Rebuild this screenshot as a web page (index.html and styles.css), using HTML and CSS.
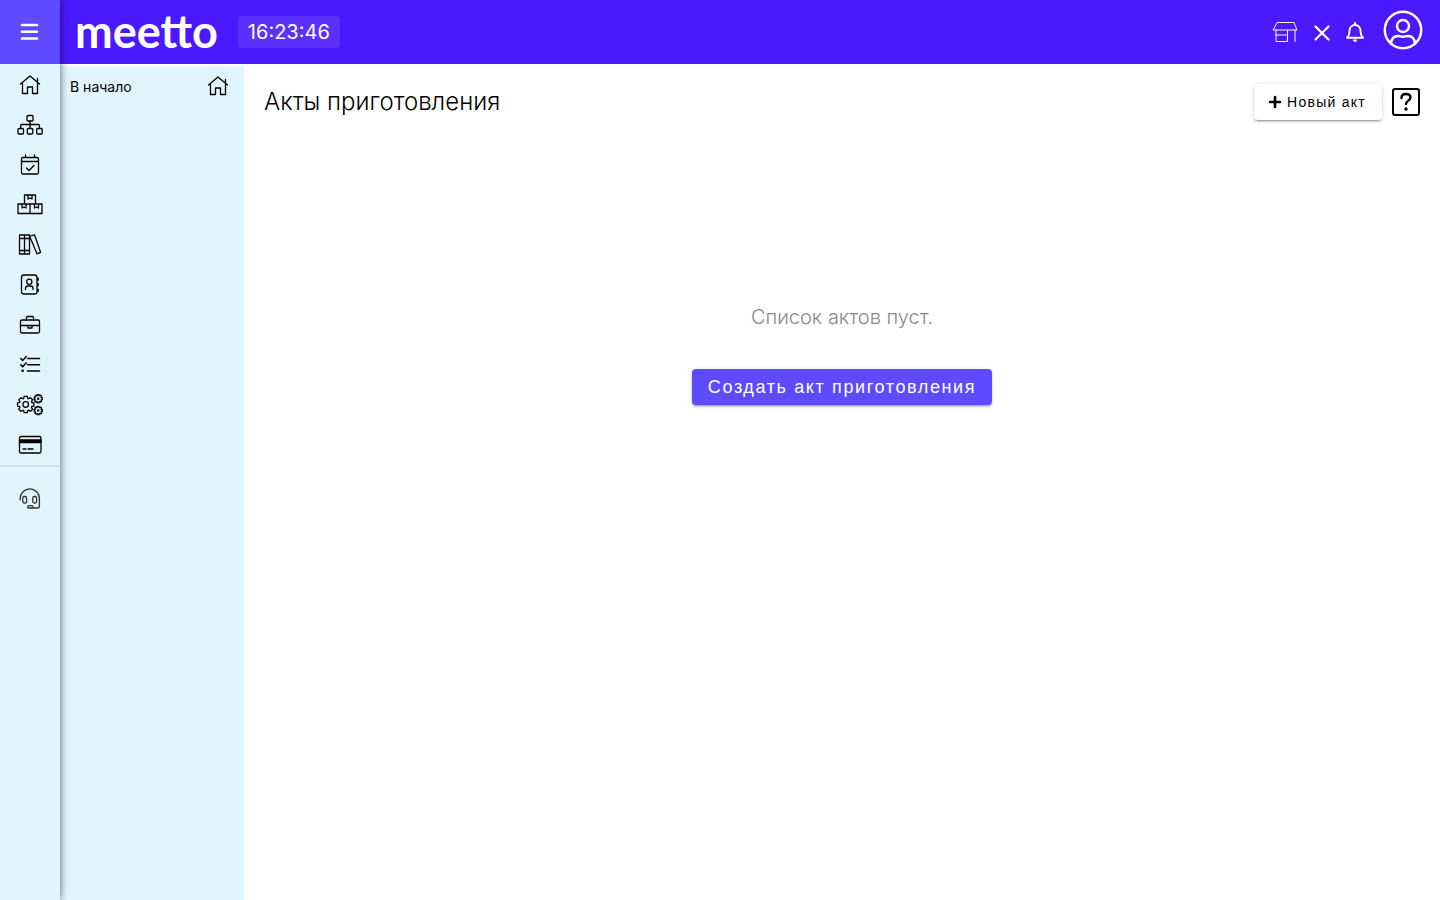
FILE: index.html
```html
<!DOCTYPE html>
<html lang="ru">

<head>
    <meta charset="UTF-8">
    <meta name="viewport" content="width=device-width, initial-scale=1.0">
    <title>Акты приготовления</title>
    <link rel="stylesheet" href="styles.css">
</head>

<body>
    <aside class="sidebar">
        <button class="menu-toggle" type="button" aria-label="Меню">
            <svg class="icon" viewBox="0 0 28 28"><path d="M6 7h15M6 13.700h15M6 20.500h15" stroke-width="2.600"/></svg>
        </button>
        <nav class="side-nav">
            <a href="#" aria-label="Главная">
                <svg class="icon" viewBox="0 0 28 28"><path d="M4.500 13 14 5l9.500 8M6.500 12v10.500h5V16h5v6.500h5V12M21.500 11V7.500"/></svg>
            </a>
            <a href="#" aria-label="Структура">
                <svg class="icon" viewBox="0 0 28 28"><rect x="11" y="4.500" width="6" height="5.500" rx="1"/><rect x="2" y="17.500" width="5.500" height="5.500" rx="1"/><rect x="11.300" y="17.500" width="5.500" height="5.500" rx="1"/><rect x="20.700" y="17.500" width="5.500" height="5.500" rx="1"/><path d="M14 10v7.500M4.700 17.500v-3q0-1 1-1h16.700q1 0 1 1v3"/></svg>
            </a>
            <a href="#" aria-label="Календарь">
                <svg class="icon" viewBox="0 0 28 28"><rect x="5.500" y="6.500" width="17" height="16.500" rx="1.500"/><path d="M5.500 10.500h17M9.500 4v2.500M18.500 4v2.500M10.500 17l2.500 2.500 5-5"/></svg>
            </a>
            <a href="#" aria-label="Склад">
                <svg class="icon" viewBox="0 0 28 28"><path d="M8.500 13V4h11v9M2 13h24v9.500H2zM14 13v9.500M12 4v4l2-1 2 1V4M6 13v4l2-1 2 1v-4M18.500 13v4l2-1 2 1v-4"/></svg>
            </a>
            <a href="#" aria-label="Справочники">
                <svg class="icon" viewBox="0 0 28 28"><path d="M3.500 4h10v19h-10zM8.500 4v19M3.500 7.500h10M3.500 19.500h10M14.500 5l4-1.200L24.600 21.300l-3.600 1.500L13.500 5"/></svg>
            </a>
            <a href="#" aria-label="Контакты">
                <svg class="icon" viewBox="0 0 28 28"><rect x="5.500" y="4" width="15.500" height="19" rx="2.500"/><circle cx="13.300" cy="10.700" r="2.600"/><path d="M9.500 18.500v-1q0-2.500 2.500-2.500h2.500q2.500 0 2.500 2.500v1"/><path d="M22 7.500v1.500M22 13v1.500M22 18.500v1.500" stroke-width="1.800"/></svg>
            </a>
            <a href="#" aria-label="Портфель">
                <svg class="icon" viewBox="0 0 28 28"><rect x="4.500" y="9" width="19" height="13" rx="1.500"/><path d="M10.500 9V6.500q0-1 1-1h5q1 0 1 1V9M4.500 14.500h19M12 14.500V17h4v-2.500"/></svg>
            </a>
            <a href="#" aria-label="Задачи">
                <svg class="icon" viewBox="0 0 28 28"><path d="M11.500 7.500h12M11.500 13.700h12M11.500 20h12M4.700 7.500l2 2 3.500-4M4.700 13.700l2 2 3.500-4" stroke-width="1.500"/><circle class="dot" cx="6.700" cy="19.800" r="1.300"/></svg>
            </a>
            <a href="#" aria-label="Настройки">
                <svg class="icon" viewBox="0 0 28 28">
                    <defs>
                        <path id="gear" vector-effect="non-scaling-stroke" d="M6.100-2 8.200-1.600 8.200 1.600 6.100 2 5.700 2.900 6.900 4.700 4.700 6.900 2.900 5.700 2 6.100 1.600 8.200-1.600 8.200-2 6.100-2.900 5.700-4.700 6.900-6.900 4.700-5.700 2.900-6.100 2-8.200 1.600-8.200-1.600-6.100-2-5.700-2.900-6.900-4.700-4.700-6.900-2.900-5.700-2-6.100-1.600-8.200 1.600-8.200 2-6.100 2.900-5.700 4.700-6.900 6.900-4.700 5.700-2.900z"/>
                    </defs>
                    <use href="#gear" transform="translate(9.700 13.500)"/>
                    <circle cx="9.700" cy="13.500" r="2.800"/>
                    <use href="#gear" transform="translate(22.200 7.700) scale(.5)"/>
                    <circle class="dot" cx="22.200" cy="7.700" r="1.200"/>
                    <use href="#gear" transform="translate(22.200 19.500) scale(.5)"/>
                    <circle class="dot" cx="22.200" cy="19.500" r="1.200"/>
                </svg>
            </a>
            <a href="#" aria-label="Оплата">
                <svg class="icon" viewBox="0 0 28 28"><rect x="3.500" y="5.500" width="21.500" height="16.500" rx="1.500"/><path class="solid" d="M3.500 9h21.500v2.500H3.500z"/><path d="M7 18h3M12 18h5"/></svg>
            </a>
        </nav>
        <a class="support" href="#" aria-label="Поддержка">
            <svg class="icon" viewBox="0 0 28 28"><path d="M4.200 15v-1.500a9.600 9.600 0 0 1 19.200 0V21q0 2-2 2H15M15 23h-2q-1.500 0-1.500-1.200t1.500-1.200h2.500q1.500 0 1.500 1.400"/><rect x="6.800" y="11.500" width="3.800" height="6.500" rx="1.500"/><rect x="16.800" y="11.500" width="3.800" height="6.500" rx="1.500"/></svg>
        </a>
    </aside>

    <div class="page">
        <header class="topbar">
            <a class="logo" href="#">meetto</a>
            <time class="clock">16:23:46</time>
            <div class="actions">
                <button type="button" aria-label="Магазин">
                    <svg class="icon thin" viewBox="0 0 28 28"><path d="M6.500 4.500H23l3 7.500H2.500zM5 12v11.500h11.500V12M5 17h11.500M24 12v11.500"/></svg>
                </button>
                <button type="button" aria-label="Закрыть">
                    <svg class="icon small" viewBox="0 0 20 20"><path d="m3.500 4.500 13 13m0-13-13 13" stroke-width="2.200"/></svg>
                </button>
                <button type="button" aria-label="Уведомления">
                    <svg class="icon small" viewBox="0 0 20 20"><path d="M10 1v2M2 15.700h16c-1.500-1.500-2.500-3-2.500-6V8.500a5.500 5.500 0 0 0-11 0v1.200c0 3-1 4.500-2.500 6z" stroke-width="1.900"/><path class="solid" d="M8.500 18.200h3L10 19.500z"/></svg>
                </button>
                <button type="button" aria-label="Профиль">
                    <svg class="avatar" viewBox="0 0 40 40"><circle cx="20" cy="20" r="18.200"/><circle cx="20" cy="16" r="6"/><path d="M8 33.500c.5-5 3-7.500 7-7.500 2 0 3 .8 5 .8s3-.8 5-.8c4 0 6.500 2.500 7 7.500"/></svg>
                </button>
            </div>
        </header>

        <div class="content">
            <div class="submenu">
                <a href="#">
                    <span>В начало</span>
                    <svg class="icon" viewBox="0 0 28 28"><path d="M4.500 13 14 5l9.500 8M6.500 12v10.500h5V16h5v6.500h5V12M21.500 11V7.500"/></svg>
                </a>
            </div>
            <main>
                <div class="title-row">
                    <h1>Акты приготовления</h1>
                    <button class="btn" type="button">
                        <svg class="plus" viewBox="0 0 14 14"><path d="M7 2v10M2 7h10"/></svg>
                        Новый акт
                    </button>
                    <button class="help" type="button" aria-label="Помощь">
                        <svg viewBox="0 0 24 24"><path d="M7.500 8V7.500q0-3.500 4.500-3.500t4.500 3.500c0 3-4.500 3.300-4.500 6.500"/><circle class="dot" cx="12" cy="19" r="1.700"/></svg>
                    </button>
                </div>
                <div class="empty">
                    <p>Список актов пуст.</p>
                    <button class="btn primary" type="button">Создать акт приготовления</button>
                </div>
            </main>
        </div>
    </div>
</body>

</html>
```
FILE: styles.css
```css
* {
    box-sizing: border-box;
}

body {
    display: flex;
    min-height: 100vh;
    margin: 0;
    font-family: Inter, sans-serif;
    color: #000;
    background-color: #fff;
}

a {
    color: inherit;
    text-decoration: none;
}

button {
    padding: 0;
    border: none;
    background: none;
    color: inherit;
    font-family: inherit;
    cursor: pointer;
}

svg {
    display: block;
    flex-shrink: 0;
    fill: none;
    stroke: currentColor;
    stroke-linecap: round;
    stroke-linejoin: round;
}

.icon {
    width: 28px;
    height: 28px;
    stroke-width: 1.3;
}

.icon.small {
    width: 20px;
    height: 20px;
}

.icon.thin {
    stroke-width: 1;
}

.solid {
    fill: currentColor;
}

.dot {
    fill: currentColor;
    stroke: none;
}

/* left icon bar */
.sidebar {
    position: relative;
    z-index: 2;
    flex: 0 0 60px;
    background-color: #e1f5fe;
    box-shadow: 0 0 8px rgba(0, 0, 0, 0.6);
}

.menu-toggle {
    display: flex;
    align-items: center;
    justify-content: center;
    width: 100%;
    height: 64px;
    color: #fff;
    background-color: #5c4bff;
}

.side-nav {
    padding-top: 1px;
    border-bottom: 2px solid #d0e3ee;
}

.side-nav a,
.support {
    display: flex;
    align-items: center;
    justify-content: center;
    height: 40px;
}

.support {
    height: 64px;
    color: #333;
}

.page {
    display: flex;
    flex: 1;
    flex-direction: column;
}

.topbar {
    display: flex;
    align-items: center;
    height: 64px;
    padding: 0 17px 0 15px;
    color: #fff;
    background-color: #4a19ff;
}

.logo {
    margin-right: 20px;
    padding-bottom: 3px;
    font-family: Lato, sans-serif;
    font-size: 45px;
    font-weight: 700;
    line-height: 60px;
}

.clock {
    padding: 0 10px;
    border-radius: 4px;
    font-size: 20px;
    line-height: 32px;
    background-color: #5c30ff;
}

.actions {
    display: flex;
    align-items: center;
    gap: 13px;
    margin-left: auto;
}

.avatar {
    width: 40px;
    height: 40px;
    margin: 0 0 4px 5px;
    stroke-width: 2.4;
}

.content {
    display: flex;
    flex: 1;
}

.submenu {
    flex: 0 0 184px;
    margin-top: 2px;
    background-color: #e1f5fe;
}

.submenu a {
    display: flex;
    align-items: center;
    justify-content: space-between;
    height: 40px;
    padding: 0 12px 0 10px;
    font-size: 14px;
}

main {
    flex: 1;
    padding: 20px;
}

.title-row {
    display: flex;
    align-items: center;
    gap: 10px;
}

h1 {
    flex: 1;
    margin: 0;
    font-size: 24px;
    font-weight: 300;
    line-height: 36px;
}

.btn {
    display: flex;
    align-items: center;
    gap: 5px;
    height: 36px;
    padding: 0 16px 0 14px;
    border-radius: 4px;
    font-family: "Liberation Sans", Arial, sans-serif;
    font-size: 14px;
    letter-spacing: 0.09em;
    background-color: #fff;
    box-shadow: 0 3px 1px -2px rgba(0, 0, 0, 0.2), 0 2px 2px rgba(0, 0, 0, 0.14), 0 1px 5px rgba(0, 0, 0, 0.12);
}

.plus {
    width: 14px;
    height: 14px;
    stroke-width: 2.6;
}

.help {
    width: 28px;
    height: 28px;
    border: 2px solid #000;
    border-radius: 3px;
}

.help svg {
    width: 24px;
    height: 24px;
    stroke-width: 2.4;
}

.empty {
    display: flex;
    flex-direction: column;
    align-items: center;
    padding-top: 181px;
}

.empty p {
    margin: 0 0 36px;
    font-size: 20px;
    font-weight: 300;
    line-height: 32px;
    color: #888;
}

.primary {
    padding: 0 16px;
    font-size: 18px;
    color: #fff;
    background-color: #5c4bff;
}
```
